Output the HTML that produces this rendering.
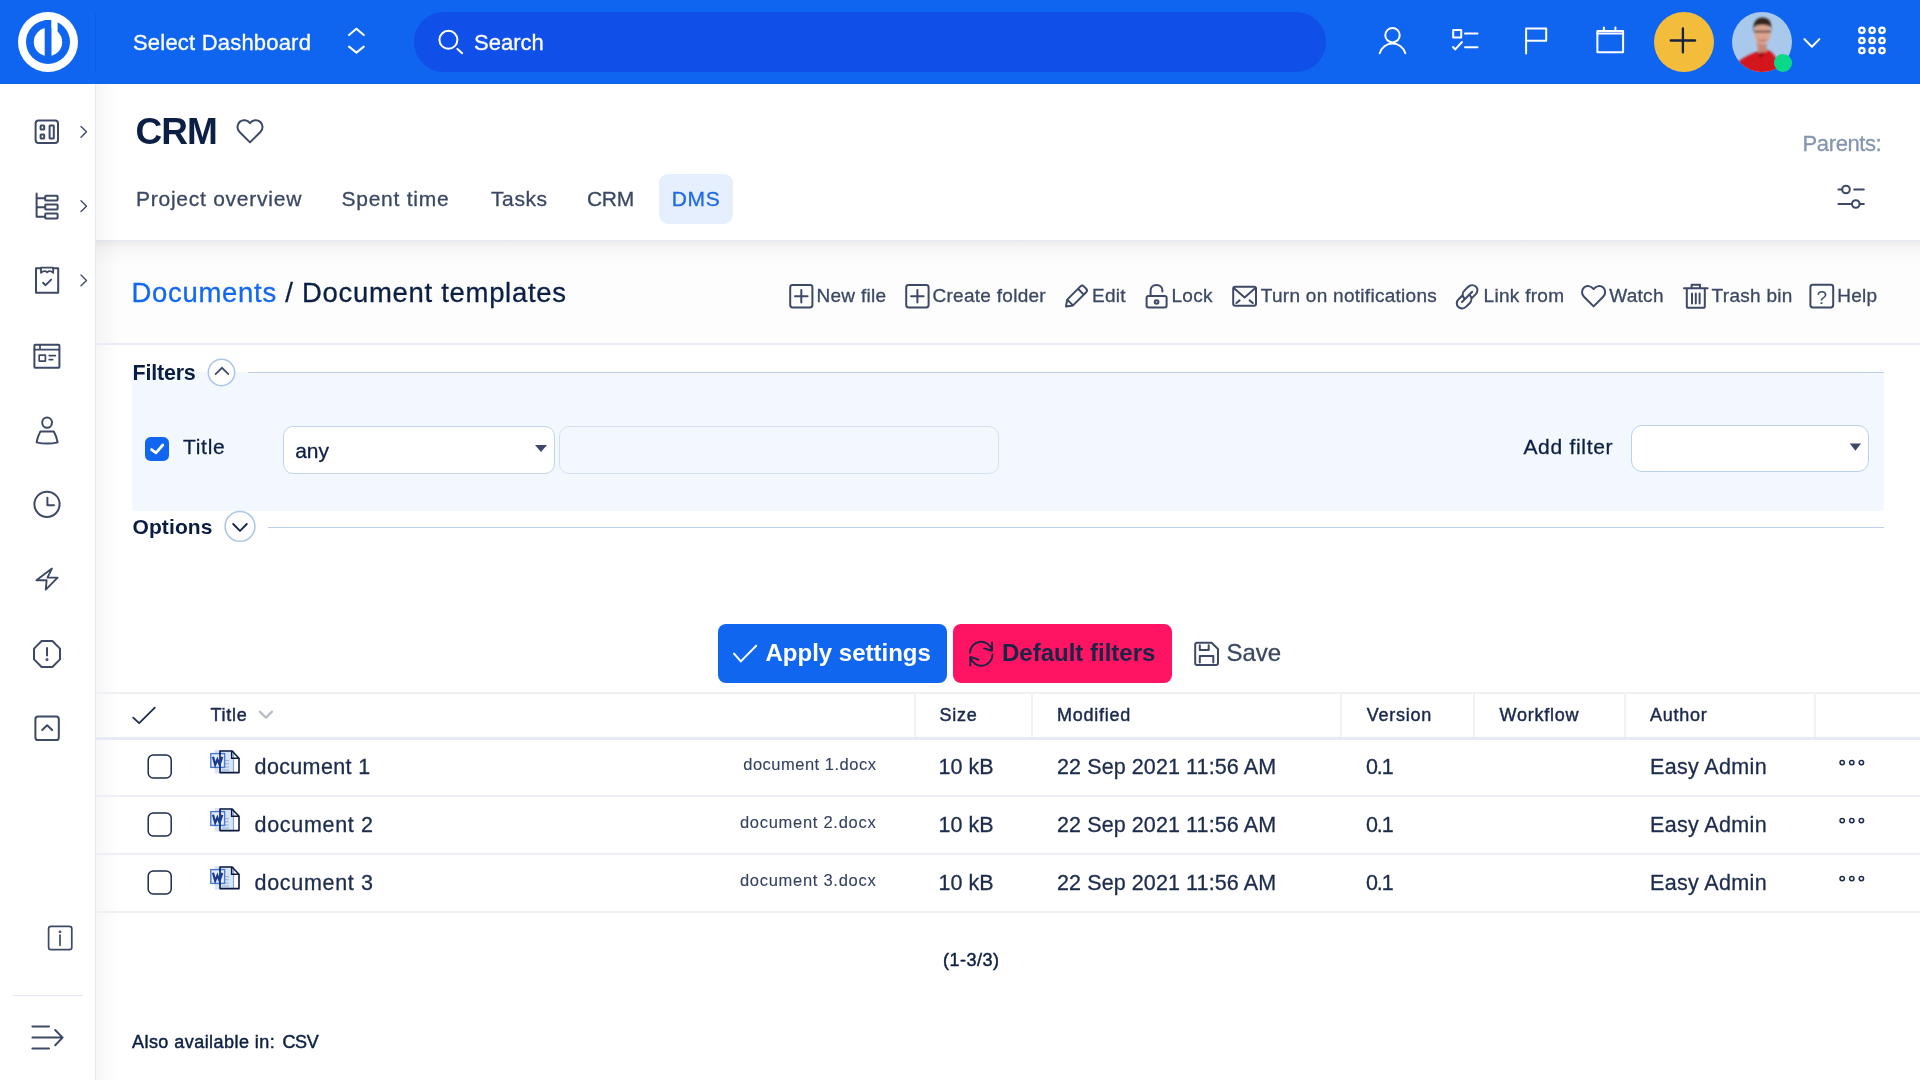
<!DOCTYPE html>
<html><head><meta charset="utf-8">
<style>
*{box-sizing:border-box;margin:0;padding:0}
html,body{width:1920px;height:1080px;overflow:hidden;background:#fff;-webkit-font-smoothing:antialiased;font-family:"Liberation Sans",sans-serif;color:#0c1f44}
.a{position:absolute;white-space:nowrap;line-height:1;-webkit-text-stroke:.3px currentColor}
.a[style*="font-weight:700"]{-webkit-text-stroke:0}
svg{position:absolute;overflow:visible}
.ic{stroke:#3d4966;fill:none;stroke-width:2;stroke-linecap:round;stroke-linejoin:round}
.wi{stroke:#fff;fill:none;stroke-width:2;stroke-linecap:round;stroke-linejoin:round}
.tab{font-size:21px;color:#3b4863;top:187.6px;letter-spacing:.75px}
.act{font-size:19px;color:#3b4863;top:286.4px;letter-spacing:.28px}
.th{font-size:18px;font-weight:400;color:#1a2a4d;top:706.2px;letter-spacing:.75px;-webkit-text-stroke:.45px currentColor}
.td{font-size:21.5px;color:#1d2c4d}
.fn{font-size:16.5px;color:#34415f;letter-spacing:.5px;-webkit-text-stroke:.1px currentColor}
.vs{position:absolute;top:693px;width:2px;height:44px;background:#f0f2f6}
.hr{position:absolute;left:96px;width:1824px;height:2px;background:#edf0f5}
</style></head><body><div style="position:absolute;left:0;top:0;width:1920px;height:1080px;will-change:transform">

<!-- TOP BAR -->
<div class="a" style="left:0;top:0;width:1920px;height:84px;background:#0f65f0"></div>
<svg style="left:18px;top:12px" width="60" height="60" viewBox="0 0 60 60">
  <circle cx="30" cy="30" r="30" fill="#fff"/>
  <circle cx="30" cy="30" r="22" fill="#0f65f0"/>
  <circle cx="30" cy="30" r="14.2" fill="#fff"/>
  <rect x="26.7" y="8" width="6.8" height="37" fill="#0f65f0"/>
  <path d="M33.3 5 L39.6 5 L39.6 19.4 L33.3 16 Z" fill="#fff"/>
</svg>
<div class="a" style="left:95px;top:12px;width:1px;height:60px;background:#0d5ae0;opacity:.7"></div>
<div class="a" style="left:133px;top:32.4px;font-size:22px;color:#fff;letter-spacing:.2px">Select Dashboard</div>
<svg style="left:340px;top:20px" width="32" height="40" viewBox="0 0 32 40"><path class="wi" d="M9 15 L16.4 8.8 L23.8 15 M9 26.6 L16.4 32.6 L23.8 26.6" stroke-width="1.8"/></svg>
<div class="a" style="left:414px;top:12px;width:912px;height:60px;border-radius:30px;background:#114fe9"></div>
<svg style="left:430px;top:20px" width="40" height="40" viewBox="0 0 40 40"><circle class="wi" cx="18.4" cy="19.8" r="9"/><path class="wi" d="M27.4 28.9 L32.2 33.2"/></svg>
<div class="a" style="left:474px;top:32.4px;font-size:22px;color:#fff">Search</div>

<!-- person -->
<svg style="left:1370px;top:20px" width="44" height="44" viewBox="0 0 44 44"><circle class="wi" cx="22.5" cy="15.2" r="7.2" stroke-width="2.1"/><path class="wi" d="M9.7 33.2 A13.3 13.3 0 0 1 35.3 33.2" stroke-width="2.1"/></svg>
<!-- tasks -->
<svg style="left:1440px;top:20px" width="44" height="44" viewBox="0 0 44 44"><rect class="wi" x="13.2" y="10" width="8" height="7.6" stroke-width="2" stroke-linecap="butt" stroke-linejoin="miter"/><path class="wi" d="M25 13.6 L37.5 13.6 M25 27.3 L37.5 27.3 M13 27 L15.2 29.4 L22 22" stroke-width="2.1"/></svg>
<!-- flag -->
<svg style="left:1510px;top:20px" width="44" height="44" viewBox="0 0 44 44"><path class="wi" d="M16.1 33.6 L16.1 8.5 L36.2 8.5 L36.2 20.7 L16.1 20.7" stroke-width="2.1" stroke-linejoin="miter" stroke-linecap="butt"/></svg>
<!-- calendar -->
<svg style="left:1588px;top:20px" width="44" height="44" viewBox="0 0 44 44"><rect class="wi" x="9.4" y="11" width="25.7" height="21.2" stroke-width="2.1" stroke-linejoin="miter"/><path class="wi" d="M9.4 13.6 L35.1 13.6 M15.9 7.6 L15.9 11 M27.4 7.6 L27.4 11" stroke-width="2.1" stroke-linecap="butt"/></svg>
<!-- plus -->
<div class="a" style="left:1654px;top:12px;width:60px;height:60px;border-radius:50%;background:#f3bd3b"></div>
<svg style="left:1664px;top:22px" width="40" height="40" viewBox="0 0 40 40"><path d="M18.9 6.3 L18.9 30.4 M6.7 18.5 L31.1 18.5" stroke="#17213f" stroke-width="2.3" stroke-linecap="round"/></svg>
<!-- avatar -->
<svg style="left:1732px;top:12px" width="60" height="60" viewBox="0 0 60 60">
  <defs><clipPath id="av"><circle cx="30" cy="30" r="30"/></clipPath>
  <filter id="bl" x="-50%" y="-50%" width="200%" height="200%"><feGaussianBlur stdDeviation="1.3"/></filter></defs>
  <g clip-path="url(#av)">
    <rect width="60" height="60" fill="#a9c9ec"/>
    <g filter="url(#bl)">
      <path d="M-2 64 L2 54 C8 47 16 43 24 40 L36 38 C42 41 47 48 50 64 Z" fill="#d3121f"/>
      <path d="M24 40 L29 46 L35 38 Z" fill="#9e0d17"/>
      <path d="M25 30 L34 30 L35 40 L26 41 Z" fill="#c98672"/>
      <ellipse cx="30.5" cy="21" rx="8.2" ry="11.5" fill="#dca490"/>
      <path d="M21.5 20 C20.5 9 25 5.5 30.5 5.5 C36.5 5.5 40 9 39.5 19 L38.5 15 C34.5 12 26 12 22.5 15 Z" fill="#33261f"/>
      <path d="M22 19.6 L39 19.6" stroke="#3a2c28" stroke-width="1.6"/>
      <path d="M26 27.5 C28 29 32 29 34.5 27.5" stroke="#b7675a" stroke-width="1.2" fill="none"/>
    </g>
  </g>
</svg>
<div class="a" style="left:1773.8px;top:54px;width:18px;height:18px;border-radius:50%;background:#0bd98a"></div>
<svg style="left:1795px;top:25px" width="34" height="34" viewBox="0 0 34 34"><path class="wi" d="M9.4 14.1 L16.9 21.7 L24.4 14.1"/></svg>
<!-- grid -->
<svg style="left:1850px;top:18px" width="44" height="44" viewBox="0 0 44 44">
  <g fill="none" stroke="#fff" stroke-width="2.3">
  <circle cx="11.9" cy="12.3" r="2.7"/><circle cx="22.1" cy="12.3" r="2.7"/><circle cx="32" cy="12.3" r="2.7"/>
  <circle cx="11.9" cy="22.5" r="2.7"/><circle cx="22.1" cy="22.5" r="2.7"/><circle cx="32" cy="22.5" r="2.7"/>
  <circle cx="11.9" cy="32.6" r="2.7"/><circle cx="22.1" cy="32.6" r="2.7"/><circle cx="32" cy="32.6" r="2.7"/>
  </g>
</svg>

<!-- SIDEBAR -->
<div class="a" style="left:0;top:84px;width:96px;height:996px;background:#fff;border-right:1px solid #e6e9ef"></div>
<svg style="left:0;top:84px" width="96" height="996" viewBox="0 84 96 996">
  <g class="ic">
    <!-- dashboard -->
    <rect x="35.6" y="120.6" width="22.4" height="22.4" rx="3"/>
    <rect x="40.6" y="125.4" width="3.6" height="4.2" rx=".6"/>
    <rect x="40.6" y="134.4" width="3.6" height="4.2" rx=".6"/>
    <rect x="49.6" y="125.4" width="4.2" height="13.2" rx=".6"/>
    <path d="M81 126.4 L86.5 131.8 L81 137.2" stroke-width="1.35"/>
    <!-- tree -->
    <path d="M36.6 193.4 L36.6 216.8 L44.4 216.8 M36.6 198.2 L44.4 198.2 M36.6 207.2 L44.4 207.2"/>
    <rect x="45.2" y="195.8" width="12.4" height="4.8" rx=".8"/>
    <rect x="45.2" y="204.6" width="12.4" height="5" rx=".8"/>
    <rect x="45.2" y="213.6" width="12.4" height="5" rx=".8"/>
    <path d="M81 200.8 L86.5 206.2 L81 211.6" stroke-width="1.35"/>
    <!-- clipboard -->
    <path d="M41 268.3 L36 268.3 L36 292.8 L58.2 292.8 L58.2 268.3 L53.2 268.3"/>
    <path d="M41 272.8 L41 267.6 L53.2 267.6 L53.2 272.8 C51 270.8 49 270.6 47.1 272.2 C45.2 270.6 43.2 270.8 41 272.8 Z" stroke-width="1.8"/>
    <path d="M43 282.8 L45.6 285.2 L51.2 279.6" stroke-width="1.9"/>
    <path d="M81 275 L86.5 280.4 L81 285.8" stroke-width="1.35"/>
    <!-- card -->
    <rect x="34.4" y="344.8" width="25" height="23" rx=".8"/>
    <path d="M34.4 349.6 L59.4 349.6 M40 344.8 L40 349.6" stroke-width="1.7"/>
    <rect x="39.2" y="355.2" width="6.2" height="6" rx=".3" stroke-width="1.7"/>
    <path d="M49.2 355.6 L55.4 355.6 M49.2 359.6 L52.6 359.6" stroke-width="1.7"/>
    <!-- person -->
    <ellipse cx="47.1" cy="422.6" rx="4.9" ry="5.2"/>
    <path d="M40.3 431.6 L53.8 431.6 C55.4 434.4 57 438.4 57.6 442.4 C50.6 444 43.6 444 36.6 442.4 C37.2 438.4 38.8 434.4 40.3 431.6 Z"/>
    <!-- clock -->
    <circle cx="47" cy="504.3" r="12.6"/>
    <path d="M47.4 497.8 L47.4 505.2 L54 505.2"/>
    <!-- lightning -->
    <path d="M51.9 568.6 L36.4 580.2 L46.6 580.2 L45.8 589.6 L57.6 577.6 L47.4 577.6 Z" stroke-width="1.9"/>
    <!-- octagon -->
    <path d="M41.6 641 L52.4 641 L60 648.6 L60 659.4 L52.4 667 L41.6 667 L34 659.4 L34 648.6 Z"/>
    <path d="M47 648 L47 655.6" stroke-width="2"/>
    <circle cx="47" cy="659.6" r=".6" stroke-width="1.8"/>
    <!-- square up -->
    <rect x="35.4" y="716.6" width="23.4" height="23.4" rx="2.6"/>
    <path d="M42.2 730 L47.1 725.2 L52.2 730"/>
    <!-- info -->
    <rect x="48.6" y="926.4" width="23.2" height="23.2" rx="2.4" stroke-width="1.7"/>
    <path d="M60 935.2 L60 945.2" stroke-width="1.7"/>
    <circle cx="60" cy="931.8" r=".5" stroke-width="1.8"/>
    <!-- menu -->
    <path d="M32.4 1026.6 L49 1026.6 M32.4 1037.6 L62.6 1037.6 M32.4 1048.6 L49 1048.6 M55.2 1030 L62.6 1037.6 L55.2 1045.2" stroke-width="2"/>
  </g>
  <rect x="12" y="995" width="71" height="1" fill="#e3e8f1"/>
</svg>

<!-- HEADER -->
<div class="a" style="left:96px;top:84px;width:1824px;height:157px;background:#fff;border-bottom:1px solid #e3e9f3"></div>
<div class="a" style="left:96px;top:241px;width:1824px;height:102px;background:linear-gradient(#ebebeb 0px,#f5f5f6 6px,#fafafb 14px,#fdfdfd 26px,#fdfdfd 100%)"></div>
<div class="a" style="left:96px;top:84px;width:22px;height:996px;background:linear-gradient(90deg,rgba(0,0,0,.035),rgba(0,0,0,0))"></div>

<div class="a" style="left:135.5px;top:112.9px;font-size:37px;font-weight:700;color:#0c1f44;letter-spacing:-1px">CRM</div>
<svg style="left:230.5px;top:110.8px" width="40" height="40" viewBox="0 0 40 40"><path class="ic" d="M19 31.4 L8.6 21 C5.6 18 5.8 13.2 9 10.6 C12 8.2 16.4 8.8 19 12.2 C21.6 8.8 26 8.2 29 10.6 C32.2 13.2 32.4 18 29.4 21 Z" stroke-width="1.8"/></svg>
<div class="a" style="left:1802.6px;top:132.8px;font-size:22px;color:#8595ae;letter-spacing:-.4px">Parents:</div>
<svg style="left:1830px;top:176px" width="44" height="44" viewBox="0 0 44 44"><g class="ic" stroke-width="1.9"><circle cx="16" cy="13.5" r="3.8"/><circle cx="25.8" cy="28" r="3.8"/><path d="M8.4 13.5 L12.2 13.5 M24.2 13.5 L33.8 13.5 M8.4 28 L22 28 M29.6 28 L33.8 28"/></g></svg>

<div class="a" style="left:659px;top:174px;width:74px;height:50px;border-radius:9px;background:#e5effd"></div>
<div class="a tab" style="left:136px">Project overview</div>
<div class="a tab" style="left:341.5px">Spent time</div>
<div class="a tab" style="left:491px;letter-spacing:.6px">Tasks</div>
<div class="a tab" style="left:587px;letter-spacing:-.3px">CRM</div>
<div class="a tab" style="left:671.8px;color:#1f6ae6;letter-spacing:.6px">DMS</div>

<!-- CRUMB -->
<div class="a" style="left:131.5px;top:278.9px;font-size:27.5px;color:#0c1f44;letter-spacing:.7px"><span style="color:#1268ef">Documents</span> / Document templates</div>

<!-- actions -->
<svg style="left:780px;top:276px" width="1110" height="40" viewBox="780 276 1110 40">
  <g class="ic" stroke-width="1.55">
    <rect x="790.2" y="285" width="22.2" height="22.4" rx="2.4"/>
    <path d="M801.3 290 L801.3 302.4 M795 296.2 L807.6 296.2"/>
    <rect x="906.2" y="285" width="22.4" height="22.4" rx="2.4"/>
    <path d="M917.4 290 L917.4 302.4 M911.1 296.2 L923.6 296.2"/>
    <!-- pencil -->
    <path d="M1066 306.4 L1067.2 299.6 L1080.4 286.4 C1081.4 285.4 1082.8 285.4 1083.8 286.4 L1086.2 288.8 C1087.2 289.8 1087.2 291.2 1086.2 292.2 L1073 305.4 Z M1067.2 299.6 L1073 305.4 M1078 288.8 L1083.8 294.6"/>
    <!-- lock -->
    <rect x="1146.6" y="296" width="20" height="11.6" rx="2"/>
    <path d="M1150.6 296 L1150.6 290.6 C1150.6 287.2 1153 285 1156.4 285 C1159.8 285 1162.4 287.2 1162.4 290.6 L1162.4 291.6"/>
    <circle cx="1156.6" cy="302" r="1.8"/>
    <!-- envelope -->
    <rect x="1233.2" y="286.8" width="22.8" height="19" rx="2"/>
    <path d="M1233.8 288 L1244.6 297.4 L1255.4 288 M1236.4 303 L1239.6 300.4 M1252.8 303 L1249.6 300.4"/>
    <!-- link -->
    <path transform="translate(-4 0.6) scale(1)" d="M1466.6 294.6 L1462.6 298.6 C1460.2 301 1460.2 304.4 1462.4 306.4 C1464.4 308.4 1467.8 308.4 1470.2 306 L1473.6 302.6 C1475.8 300.4 1476 297.2 1474.2 295 M1468 297.4 C1466.2 295.2 1466.4 292 1468.6 289.8 L1472 286.4 C1474.4 284 1477.8 284 1479.8 286 C1482 288 1482 291.4 1479.6 293.8 L1475.6 297.8 M1466 301.4 L1476.2 291.2"/>
    <!-- heart -->
    <path d="M1593.6 306.4 L1584 296.8 C1581.4 294.2 1581.4 290 1584 287.6 C1586.6 285.2 1590.6 285.6 1593.6 289 C1596.6 285.6 1600.6 285.2 1603.2 287.6 C1605.8 290 1605.8 294.2 1603.2 296.8 Z"/>
    <!-- trash -->
    <path d="M1684 288.2 L1707.6 288.2 M1691.6 288.2 L1691.6 284.8 L1700 284.8 L1700 288.2 M1686.8 288.2 L1686.8 306.2 C1686.8 307.2 1687.4 307.8 1688.4 307.8 L1703.2 307.8 C1704.2 307.8 1704.8 307.2 1704.8 306.2 L1704.8 288.2 M1692 293.6 L1692 303.4 M1695.8 293.6 L1695.8 303.4 M1699.6 293.6 L1699.6 303.4"/>
    <!-- help -->
    <rect x="1810.4" y="284.8" width="22.8" height="22.6" rx="2.4"/>
  </g>
  <text x="1821.8" y="304" font-family="Liberation Sans" font-size="19" fill="#3d4966" text-anchor="middle">?</text>
</svg>
<div class="a act" style="left:816.5px">New file</div>
<div class="a act" style="left:932.5px">Create folder</div>
<div class="a act" style="left:1092px">Edit</div>
<div class="a act" style="left:1171.5px">Lock</div>
<div class="a act" style="left:1260.8px">Turn on notifications</div>
<div class="a act" style="left:1483.6px">Link from</div>
<div class="a act" style="left:1609.2px">Watch</div>
<div class="a act" style="left:1711.6px">Trash bin</div>
<div class="a act" style="left:1837.2px">Help</div>

<!-- MAIN -->
<div class="a" style="left:96px;top:343px;width:1824px;height:2px;background:#e8edf5"></div>

<!-- filters -->
<div class="a" style="left:132.2px;top:372.4px;width:1752px;height:138.6px;background:#f3f8fe"></div>
<div class="a" style="left:247.6px;top:371.8px;width:1636.4px;height:1.6px;background:#bcd0ea"></div>
<div class="a" style="left:132.5px;top:362.8px;font-size:21.5px;font-weight:700;color:#0a1d42;letter-spacing:-.2px">Filters</div>
<svg style="left:200px;top:350px" width="44" height="44" viewBox="0 0 44 44"><circle cx="21.5" cy="22.5" r="13.2" fill="#fff" stroke="#a9c5e8" stroke-width="1.5"/><path d="M15.6 24.2 L22 17.8 L28.4 24.2" fill="none" stroke="#3d4966" stroke-width="1.7" stroke-linecap="round"/></svg>

<div class="a" style="left:145.2px;top:436.8px;width:24px;height:24px;border-radius:5.6px;background:#1166ef"></div>
<svg style="left:140px;top:430px" width="34" height="34" viewBox="0 0 34 34"><path d="M11.6 19.6 L16 22.8 L22.8 15" fill="none" stroke="#fff" stroke-width="2.8" stroke-linecap="round" stroke-linejoin="round"/></svg>
<div class="a" style="left:183px;top:436.3px;font-size:21px;color:#0c1f44;letter-spacing:.7px">Title</div>

<div class="a" style="left:283.2px;top:426.2px;width:271.4px;height:47.6px;border-radius:10px;background:#fff;border:1.5px solid #c3d4ec"></div>
<div class="a" style="left:295.2px;top:439.5px;font-size:21px;color:#0c1f44">any</div>
<svg style="left:530px;top:440px" width="20" height="16" viewBox="0 0 20 16"><path d="M5 5 L17 5 L11 12 Z" fill="#3d4966"/></svg>
<div class="a" style="left:559.2px;top:426.2px;width:440px;height:47.6px;border-radius:10px;background:#f3f8fe;border:1.5px solid #d3e0f1"></div>

<div class="a" style="left:1523.4px;top:436px;font-size:21px;color:#0c1f44;letter-spacing:.7px">Add filter</div>
<div class="a" style="left:1631px;top:425.2px;width:238px;height:47px;border-radius:11px;background:#fff;border:1.5px solid #bcd0ea"></div>
<svg style="left:1845px;top:438px" width="20" height="16" viewBox="0 0 20 16"><path d="M4.8 5.6 L16 5.6 L10.4 12.8 Z" fill="#3d4966"/></svg>

<div class="a" style="left:132.5px;top:516.2px;font-size:21px;font-weight:700;color:#0a1d42;letter-spacing:.1px">Options</div>
<div class="a" style="left:268px;top:526.6px;width:1616px;height:1.6px;background:#bcd0ea"></div>
<svg style="left:218px;top:505px" width="44" height="44" viewBox="0 0 44 44"><circle cx="22" cy="21.4" r="14.9" fill="#fff" stroke="#a9c5e8" stroke-width="1.5"/><path d="M15.2 19 L22 25.8 L28.8 19" fill="none" stroke="#17264a" stroke-width="1.9" stroke-linecap="round" stroke-linejoin="round"/></svg>

<!-- buttons -->
<div class="a" style="left:717.5px;top:624px;width:229px;height:58.6px;border-radius:8px;background:#1166f0"></div>
<svg style="left:726px;top:636px" width="40" height="36" viewBox="0 0 40 36"><path d="M8 17.6 L14.8 25.4 L30.2 9.8" fill="none" stroke="#fff" stroke-width="2" stroke-linecap="round" stroke-linejoin="round"/></svg>
<div class="a" style="left:765.5px;top:641.4px;font-size:24px;font-weight:700;color:#fff">Apply settings</div>
<div class="a" style="left:953px;top:624px;width:219px;height:58.6px;border-radius:8px;background:#ff1464"></div>
<svg style="left:962px;top:635px" width="40" height="40" viewBox="0 0 40 40"><g fill="none" stroke="#1a2545" stroke-width="1.9" stroke-linecap="round" stroke-linejoin="round"><path d="M7.9 17.8 A11.2 11.2 0 0 1 29.8 14.6"/><path d="M30 7.4 L30 15.75 L22.1 13.4"/><path d="M30.5 19.5 A11.2 11.2 0 0 1 8.6 22.8"/><path d="M8.3 30.5 L8.3 21.9 L16.5 24.7"/></g></svg>
<div class="a" style="left:1002px;top:641.4px;font-size:24px;font-weight:700;color:#1a2545">Default filters</div>
<svg style="left:1186px;top:634px" width="40" height="40" viewBox="0 0 40 40"><g class="ic" stroke-width="1.8"><path d="M11.2 8.7 L25.6 8.7 L32 15 L32 29 C32 30.1 31.1 31 30 31 L11.2 31 C10.1 31 9.2 30.1 9.2 29 L9.2 10.7 C9.2 9.6 10.1 8.7 11.2 8.7 Z"/><path d="M13.8 11.3 L13.8 16.1 L22.7 16.1 L22.7 11.3 M13.8 28.4 L13.8 22 L27.3 22 L27.3 28.4"/></g></svg>
<div class="a" style="left:1226.5px;top:641.4px;font-size:24px;color:#3b4863">Save</div>

<!-- table -->
<div class="hr" style="top:692px"></div>
<div class="vs" style="left:914px"></div>
<div class="vs" style="left:1031px"></div>
<div class="vs" style="left:1340px"></div>
<div class="vs" style="left:1473px"></div>
<div class="vs" style="left:1624px"></div>
<div class="vs" style="left:1814px"></div>
<div class="hr" style="top:736.6px;height:3px;background:#e6ebf3"></div>
<div class="hr" style="top:795.2px"></div>
<div class="hr" style="top:853.2px"></div>
<div class="hr" style="top:910.8px"></div>

<svg style="left:120px;top:695px" width="50" height="40" viewBox="0 0 50 40"><path d="M13.2 22.6 L19.2 28.2 L34.8 12.6" fill="none" stroke="#1d2c4d" stroke-width="1.8" stroke-linecap="round" stroke-linejoin="round"/></svg>
<div class="a th" style="left:210.4px">Title</div>
<svg style="left:250px;top:700px" width="30" height="30" viewBox="0 0 30 30"><path d="M9.8 11.6 L15.9 17.6 L22 11.6" fill="none" stroke="#b8bcc6" stroke-width="2.2" stroke-linecap="round" stroke-linejoin="round"/></svg>
<div class="a th" style="left:939.4px">Size</div>
<div class="a th" style="left:1057px">Modified</div>
<div class="a th" style="left:1366.8px">Version</div>
<div class="a th" style="left:1499.6px">Workflow</div>
<div class="a th" style="left:1650px">Author</div>

<!-- rows -->
<svg style="left:0;top:0" width="1920" height="1080" viewBox="0 0 1920 1080">
  <defs>
    <g id="doc">
      <rect x="214.7" y="749.9" width="18.8" height="23.6" fill="#d8e5f7"/>
      <path d="M233.5 751 L233.5 773" stroke="#8aa6d4" stroke-width="1.2"/>
      <path d="M222 760.6 L229 760.6 M222 763.8 L229 763.8 M222 767 L229 767 M222 770 L229 770" stroke="#8aa6d4" stroke-width=".9"/>
      <rect x="210.8" y="753.6" width="13.8" height="13.8" fill="#e4edfa" stroke="#4a7bd0" stroke-width="1.4"/>
      <path d="M220 751 L232 751 L239 758.2 L239 772.6 L220 772.6 Z" fill="none" stroke="#0c1a40" stroke-width="1.6" stroke-linejoin="round"/>
      <path d="M231.6 751 L231.6 758.2 L239 758.2" fill="none" stroke="#0c1a40" stroke-width="1.4"/>
      <path d="M213 756.8 L215.2 764.8 L217.4 759.4 L219.6 764.8 L222.2 756.8" fill="none" stroke="#1a3a92" stroke-width="2.2"/>
    </g>
    <g id="cb"><rect x="148.2" y="755" width="23" height="23" rx="5" fill="#fff" stroke="#1d2c4d" stroke-width="1.5"/></g>
    <g id="dots"><g fill="none" stroke="#1d2c4d" stroke-width="1.5"><circle cx="1842.2" cy="762.6" r="2.2"/><circle cx="1851.8" cy="762.6" r="2.2"/><circle cx="1861.4" cy="762.6" r="2.2"/></g></g>
  </defs>
  <use href="#doc"/><use href="#doc" y="58"/><use href="#doc" y="116"/>
  <use href="#cb"/><use href="#cb" y="58"/><use href="#cb" y="116"/>
  <use href="#dots"/><use href="#dots" y="58"/><use href="#dots" y="116"/>
</svg>

<div class="a td" style="left:254.6px;top:756.8px;letter-spacing:.35px">document 1</div>
<div class="a td" style="left:254.6px;top:814.8px;letter-spacing:.68px">document 2</div>
<div class="a td" style="left:254.6px;top:872.8px;letter-spacing:.68px">document 3</div>
<div class="a fn" style="right:1043.6px;top:755.6px">document 1.docx</div>
<div class="a fn" style="right:1043.6px;top:813.6px;letter-spacing:.72px">document 2.docx</div>
<div class="a fn" style="right:1043.6px;top:871.6px;letter-spacing:.72px">document 3.docx</div>

<div class="a td" style="left:938.6px;top:756.8px">10 kB</div>
<div class="a td" style="left:938.6px;top:814.8px">10 kB</div>
<div class="a td" style="left:938.6px;top:872.8px">10 kB</div>
<div class="a td" style="letter-spacing:.1px;left:1057px;top:756.8px">22 Sep 2021 11:56 AM</div>
<div class="a td" style="letter-spacing:.1px;left:1057px;top:814.8px">22 Sep 2021 11:56 AM</div>
<div class="a td" style="letter-spacing:.1px;left:1057px;top:872.8px">22 Sep 2021 11:56 AM</div>
<div class="a td" style="letter-spacing:-1.1px;left:1366px;top:756.8px">0.1</div>
<div class="a td" style="letter-spacing:-1.1px;left:1366px;top:814.8px">0.1</div>
<div class="a td" style="letter-spacing:-1.1px;left:1366px;top:872.8px">0.1</div>
<div class="a td" style="left:1650px;top:756.8px;letter-spacing:.35px">Easy Admin</div>
<div class="a td" style="left:1650px;top:814.8px;letter-spacing:.35px">Easy Admin</div>
<div class="a td" style="left:1650px;top:872.8px;letter-spacing:.35px">Easy Admin</div>

<div class="a" style="left:943px;top:950.6px;font-size:18px;color:#0c1f44;letter-spacing:.5px;-webkit-text-stroke:.45px currentColor">(1-3/3)</div>
<div class="a" style="left:132px;top:1033.1px;font-size:18px;color:#0c1f44;letter-spacing:.45px;-webkit-text-stroke:.45px currentColor">Also available in:</div><div class="a" style="left:282.4px;top:1033.1px;font-size:18px;color:#0c1f44;letter-spacing:-.3px;-webkit-text-stroke:.45px currentColor">CSV</div>

</div></body></html>
